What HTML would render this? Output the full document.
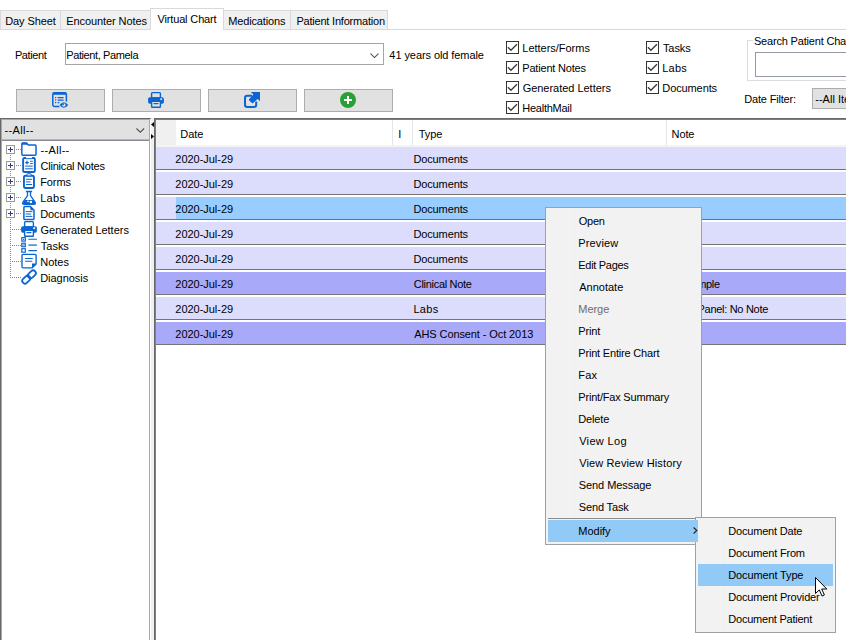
<!DOCTYPE html>
<html><head><meta charset="utf-8"><title>Virtual Chart</title>
<style>
*{box-sizing:border-box;margin:0;padding:0}
html,body{width:846px;height:640px;overflow:hidden;background:#fff}
body{font-family:"Liberation Sans",sans-serif;font-size:11px;color:#000;position:relative}
.a{position:absolute;white-space:nowrap}
.t{position:absolute;white-space:nowrap;line-height:14px;height:14px}
.tab{position:absolute;top:10px;height:19px;background:#f0f0f0;border:1px solid #d9d9d9;border-bottom:none}
.btn{position:absolute;top:89px;height:23px;width:89px;background:#e1e1e1;border:1px solid #adadad}
.btn svg{position:absolute;left:35px;top:2px;overflow:visible}
.cb{position:absolute;width:13px;height:13px;border:1px solid #333;background:#fff}
.cb svg{position:absolute;left:0;top:0}
.row{position:absolute;left:156px;width:690px;height:22px;background:#dcdcfc}
.row.d{background:#a9a9f9}
.ln{position:absolute;left:156px;width:690px;height:1px;background:#747474}
.menu{position:absolute;background:#f2f2f2;border:1px solid #a0a0a0}
.ex{position:absolute;left:6px;width:9px;height:9px;border:1px solid #989898;background:#fff}
.ex:before{content:"";position:absolute;left:1px;top:3px;width:5px;height:1px;background:#2b3f8f}
.ex:after{content:"";position:absolute;left:3px;top:1px;width:1px;height:5px;background:#2b3f8f}
.hd{position:absolute;left:16px;width:5px;height:1px;background:repeating-linear-gradient(to right,#868686 0 1px,transparent 1px 2px)}
.ic{position:absolute;left:21px;overflow:visible}
</style></head><body>
<div class="a" style="left:0;top:29px;width:846px;height:1px;background:#d9d9d9"></div>
<div class="tab" style="left:0;width:61px"></div><div class="tab" style="left:60px;width:92px"></div><div class="tab" style="left:223px;width:68px"></div><div class="tab" style="left:290px;width:98px"></div>
<div class="tab" style="left:150px;top:8px;width:74px;height:22px;background:#fff"></div>
<div id="tb1" class="t" style="left:5.20px;top:14px;letter-spacing:-0.085px">Day Sheet</div><div id="tb2" class="t" style="left:66.20px;top:14px;letter-spacing:-0.081px">Encounter Notes</div><div id="tb3" class="t" style="left:157.45px;top:12px;letter-spacing:-0.142px">Virtual Chart</div><div id="tb4" class="t" style="left:228.20px;top:14px;letter-spacing:-0.140px">Medications</div><div id="tb5" class="t" style="left:296.40px;top:14px;letter-spacing:-0.206px">Patient Information</div>
<div id="pt1" class="t" style="left:14.90px;top:48px;letter-spacing:-0.377px">Patient</div><div class="a" style="left:65px;top:43px;width:319px;height:22px;border:1px solid #a6a6a6;background:#fff"></div><div id="pt2" class="t" style="left:66.20px;top:48px;letter-spacing:-0.382px">Patient, Pamela</div><svg class="a" style="left:370px;top:53px" width="9" height="6" viewBox="0 0 9 6"><path d="M0.5 0.6L4.5 4.6L8.5 0.6" fill="none" stroke="#505050" stroke-width="1.05"/></svg><div id="pt3" class="t" style="left:389.35px;top:48px;letter-spacing:-0.075px">41 years old female</div>
<div class="cb" style="left:506px;top:41px"><svg width="11" height="11" viewBox="0 0 11 11"><path d="M0.9 5.3L3.9 8.3L10 2.2" fill="none" stroke="#3a3a3a" stroke-width="1.3"/></svg></div><div id="ca0" class="t" style="left:522.30px;top:41px;letter-spacing:-0.021px">Letters/Forms</div>
<div class="cb" style="left:506px;top:61px"><svg width="11" height="11" viewBox="0 0 11 11"><path d="M0.9 5.3L3.9 8.3L10 2.2" fill="none" stroke="#3a3a3a" stroke-width="1.3"/></svg></div><div id="ca1" class="t" style="left:522.30px;top:61px;letter-spacing:-0.195px">Patient Notes</div>
<div class="cb" style="left:506px;top:81px"><svg width="11" height="11" viewBox="0 0 11 11"><path d="M0.9 5.3L3.9 8.3L10 2.2" fill="none" stroke="#3a3a3a" stroke-width="1.3"/></svg></div><div id="ca2" class="t" style="left:522.65px;top:81px;letter-spacing:-0.026px">Generated Letters</div>
<div class="cb" style="left:506px;top:101px"><svg width="11" height="11" viewBox="0 0 11 11"><path d="M0.9 5.3L3.9 8.3L10 2.2" fill="none" stroke="#3a3a3a" stroke-width="1.3"/></svg></div><div id="ca3" class="t" style="left:522.30px;top:101px;letter-spacing:-0.259px">HealthMail</div>
<div class="cb" style="left:646px;top:41px"><svg width="11" height="11" viewBox="0 0 11 11"><path d="M0.9 5.3L3.9 8.3L10 2.2" fill="none" stroke="#3a3a3a" stroke-width="1.3"/></svg></div><div id="cb0" class="t" style="left:662.95px;top:41px;letter-spacing:-0.073px">Tasks</div>
<div class="cb" style="left:646px;top:61px"><svg width="11" height="11" viewBox="0 0 11 11"><path d="M0.9 5.3L3.9 8.3L10 2.2" fill="none" stroke="#3a3a3a" stroke-width="1.3"/></svg></div><div id="cb1" class="t" style="left:662.30px;top:61px;letter-spacing:0.182px">Labs</div>
<div class="cb" style="left:646px;top:81px"><svg width="11" height="11" viewBox="0 0 11 11"><path d="M0.9 5.3L3.9 8.3L10 2.2" fill="none" stroke="#3a3a3a" stroke-width="1.3"/></svg></div><div id="cb2" class="t" style="left:662.30px;top:81px;letter-spacing:-0.104px">Documents</div>
<div class="a" style="left:747px;top:40px;width:120px;height:41px;border:1px solid #dcdcdc"></div><div class="a" style="left:753px;top:36px;width:93px;height:10px;background:#fff"></div><div id="sp" class="t" style="left:753.90px;top:34px;letter-spacing:-0.180px">Search Patient Chart</div><div class="a" style="left:755px;top:52px;width:110px;height:25px;border:1px solid #949aa3;background:#fff"></div><div id="df" class="t" style="left:744.30px;top:92px;letter-spacing:-0.190px">Date Filter:</div><div class="a" style="left:812px;top:88px;width:60px;height:21px;border:1px solid #adadad;background:#e1e1e1"></div><div id="ai" class="t" style="left:815.31px;top:92px;letter-spacing:0.000px">--All Items--</div>
<div class="btn" style="left:16px"><svg width="16" height="16" viewBox="0 0 16 16"><rect x="0.8" y="0.8" width="13.6" height="13.6" rx="1.6" fill="#e1e1e1" stroke="#0a64d2" stroke-width="1.5"/><rect x="0.8" y="0.6" width="13.6" height="2.2" rx="1" fill="#0a64d2"/><path d="M5.6 5.6H11.6M5.6 8.1H11.6M5.6 10.6H8.6" stroke="#0a64d2" stroke-width="1.1"/><rect x="3" y="5" width="1.2" height="1.2" fill="#0a64d2"/><rect x="3" y="7.5" width="1.2" height="1.2" fill="#0a64d2"/><rect x="3" y="10" width="1.2" height="1.2" fill="#0a64d2"/><rect x="7.4" y="9.6" width="9" height="6.6" fill="#e1e1e1"/><path d="M7.6 13Q11.8 7.4 16.2 13Q11.8 18.6 7.6 13Z" fill="#0a64d2"/><circle cx="11.9" cy="13" r="1.75" fill="#e1e1e1"/><path d="M11.9 13V11.25A1.75 1.75 0 0 0 10.15 13Z" fill="#0a64d2"/></svg></div>
<div class="btn" style="left:112px"><svg width="16" height="16" viewBox="0 0 16 16"><rect x="3.6" y="0.6" width="8.8" height="5.4" rx="0.8" fill="#e1e1e1" stroke="#0a64d2" stroke-width="1.4"/><rect x="0.1" y="5.3" width="15.8" height="6.5" rx="1.7" fill="#0a64d2"/><rect x="12.3" y="6.3" width="1.8" height="1.8" fill="#e1e1e1"/><rect x="3.6" y="9.3" width="8.8" height="5.9" rx="0.8" fill="#e1e1e1" stroke="#0a64d2" stroke-width="1.4"/><path d="M5.3 11H11L9.6 12.3H5.7Z" fill="#0a64d2"/></svg></div>
<div class="btn" style="left:208px"><svg width="16" height="16" viewBox="0 0 16 16"><path d="M8 3.8H3.2Q1 3.8 1 6V12.8Q1 15 3.2 15H10Q12.2 15 12.2 12.8V9.4" fill="none" stroke="#0a64d2" stroke-width="2"/><path d="M6.9 0H16V9.2L13.7 6.9L9.1 10.9Q8.3 11.4 7.6 10.8L5.3 8.5Q4.7 7.7 5.3 7L9.4 2.6Z" fill="#0a64d2"/></svg></div>
<div class="btn" style="left:304px"><svg width="16" height="16" viewBox="0 0 16 16"><circle cx="8" cy="8" r="8" fill="#27a134"/><path d="M4 8H12M8 4V12" stroke="#fff" stroke-width="2"/></svg></div>
<div class="a" style="left:0;top:118px;width:150px;height:530px;background:#fff;border-left:1px solid #696969;border-top:1px solid #696969"></div>
<div class="a" style="left:150px;top:118px;width:1px;height:1px;background:#8a8a8a"></div>
<div class="a" style="left:1px;top:119px;width:149px;height:530px;border:1px solid #a4a8b0;border-bottom:none"></div>
<div class="a" style="left:151px;top:118px;width:3px;height:530px;background:#f0f0f0"></div>
<div class="a" style="left:2px;top:120px;width:147px;height:19px;background:#e1e1e1"></div>
<div class="a" style="left:2px;top:139px;width:147px;height:1px;background:#b5b8bd"></div>
<div class="a" style="left:2px;top:140px;width:147px;height:1px;background:#858a92"></div>
<div id="cm" class="t" style="left:4.51px;top:123px;letter-spacing:0.350px">--All--</div><svg class="a" style="left:135.8px;top:128.1px" width="9" height="6" viewBox="0 0 9 6"><path d="M0.5 0.5L4.3 4.2L8.1 0.5" fill="none" stroke="#505050" stroke-width="1.05"/></svg>
<div class="a" style="left:10px;top:155px;width:1px;height:123px;background:repeating-linear-gradient(to bottom,#868686 0 1px,transparent 1px 2px)"></div>
<div class="ex" style="top:145px"></div><div class="hd" style="top:149px"></div><svg class="ic" style="top:141px" width="16" height="16" viewBox="0 0 16 16"><path d="M0.85 2.8Q0.85 1.85 1.8 1.85H5.5L7.3 3.95H14.1Q15.05 3.95 15.05 4.9V13.2Q15.05 14.15 14.1 14.15H1.8Q0.85 14.15 0.85 13.2Z" fill="#fff" stroke="#0a64d2" stroke-width="1.45" stroke-linejoin="round"/><path d="M0.85 1.7H5.6L7.3 3.8H0.85Z" fill="#0a64d2"/></svg><div id="tr0" class="t" style="left:40.61px;top:143px;letter-spacing:0.300px">--All--</div>
<div class="ex" style="top:161px"></div><div class="hd" style="top:165px"></div><svg class="ic" style="top:157px" width="16" height="16" viewBox="0 0 16 16"><rect x="2.15" y="0.95" width="11.7" height="14.1" rx="1.3" fill="#fff" stroke="#0a64d2" stroke-width="1.9"/><rect x="5" y="-0.1" width="6" height="1.5" fill="#fff"/><path d="M4.8 1.75H11.2" stroke="#0a64d2" stroke-width="0.7"/><path d="M4.2 5.5H7.8M6 3.7V7.3" stroke="#0a64d2" stroke-width="1.25"/><path d="M9.1 4.3H11.8M9.1 6.6H11.8M4.2 9.1H11.8M4.2 11.8H11.8" stroke="#0a64d2" stroke-width="1"/></svg><div id="tr1" class="t" style="left:40.54px;top:159px;letter-spacing:-0.215px">Clinical Notes</div>
<div class="ex" style="top:177px"></div><div class="hd" style="top:181px"></div><svg class="ic" style="top:173px" width="16" height="16" viewBox="0 0 16 16"><rect x="2.95" y="2.75" width="10" height="12.2" rx="1.6" fill="#fff" stroke="#0a64d2" stroke-width="1.9"/><rect x="6" y="0.7" width="4" height="2.2" rx="0.7" fill="#fff" stroke="#0a64d2" stroke-width="1"/><path d="M5 6.3H11.1M5 8.9H9.6M5 11.5H11.1" stroke="#0a64d2" stroke-width="1"/></svg><div id="tr2" class="t" style="left:40.20px;top:175px;letter-spacing:-0.091px">Forms</div>
<div class="ex" style="top:193px"></div><div class="hd" style="top:197px"></div><svg class="ic" style="top:189px" width="16" height="16" viewBox="0 0 16 16"><path d="M6.5 2.4V6.6L1.8 13.4Q1 15.3 3.1 15.4H12.9Q15 15.3 14.2 13.4L9.5 6.6V2.4" fill="#fff" stroke="#0a64d2" stroke-width="1.3" stroke-linejoin="round"/><path d="M4.9 2.5H11.1" stroke="#0a64d2" stroke-width="1.5"/><path d="M3.7 10.9H12.3L14 13.4Q14.4 15 12.9 15.1H3.1Q1.6 15 2 13.4Z" fill="#0a64d2"/><circle cx="7" cy="12.3" r="0.85" fill="#fff"/><circle cx="9.9" cy="13" r="1.3" fill="#fff"/></svg><div id="tr3" class="t" style="left:40.20px;top:191px;letter-spacing:0.282px">Labs</div>
<div class="ex" style="top:209px"></div><div class="hd" style="top:213px"></div><svg class="ic" style="top:205px" width="16" height="16" viewBox="0 0 16 16"><path d="M2.9 2.6Q2.9 1.5 4 1.5H9.3L13 5.2V13.4Q13 14.5 11.9 14.5H4Q2.9 14.5 2.9 13.4Z" fill="#fff" stroke="#0a64d2" stroke-width="1.5" stroke-linejoin="round"/><path d="M9.4 0.9L13.7 5.2H9.4Z" fill="#0a64d2"/><path d="M4.6 6.6H11.4M4.6 9H10.2M4.6 11.4H11.4" stroke="#0a64d2" stroke-width="1"/></svg><div id="tr4" class="t" style="left:40.20px;top:207px;letter-spacing:-0.117px">Documents</div>
<div class="hd" style="left:12px;width:9px;top:229px"></div><svg class="ic" style="top:221px" width="16" height="16" viewBox="0 0 16 16"><rect x="3.6" y="0.6" width="8.8" height="5.4" rx="0.8" fill="#fff" stroke="#0a64d2" stroke-width="1.4"/><rect x="0.1" y="5.3" width="15.8" height="6.5" rx="1.7" fill="#0a64d2"/><rect x="12.3" y="6.3" width="1.8" height="1.8" fill="#fff"/><rect x="3.6" y="9.3" width="8.8" height="5.9" rx="0.8" fill="#fff" stroke="#0a64d2" stroke-width="1.4"/><path d="M5.3 11H11L9.6 12.3H5.7Z" fill="#0a64d2"/></svg><div id="tr5" class="t" style="left:40.55px;top:223px;letter-spacing:-0.020px">Generated Letters</div>
<div class="hd" style="left:12px;width:9px;top:245px"></div><svg class="ic" style="top:237px" width="16" height="16" viewBox="0 0 16 16"><rect x="0.8" y="0.6" width="3.5" height="3.5" fill="#fff" stroke="#0a64d2" stroke-width="1.15"/><rect x="0.8" y="6.2" width="3.5" height="3.5" fill="#fff" stroke="#0a64d2" stroke-width="1.15"/><rect x="0.8" y="11.7" width="3.5" height="3.5" fill="#fff" stroke="#0a64d2" stroke-width="1.15"/><rect x="2" y="1.8" width="1.1" height="1.1" fill="#0a64d2"/><path d="M2 7V8.9M3.1 7V8.9" stroke="#0a64d2" stroke-width="0.55"/><path d="M7.4 2.3H15.9M7.4 13.6H15.9" stroke="#0a64d2" stroke-width="1.1"/><path d="M7.4 8.1H15.9" stroke="#0a64d2" stroke-width="1.7" opacity="0.72"/></svg><div id="tr6" class="t" style="left:40.85px;top:239px;letter-spacing:-0.023px">Tasks</div>
<div class="hd" style="left:12px;width:9px;top:261px"></div><svg class="ic" style="top:253px" width="16" height="16" viewBox="0 0 16 16"><path d="M1 2.5Q1 1.4 2.1 1.4H14Q15.1 1.4 15.1 2.5V10.9L11.2 14.8H2.1Q1 14.8 1 13.7Z" fill="#fff" stroke="#0a64d2" stroke-width="1.35" stroke-linejoin="round"/><path d="M15.3 10.6H11V14.9Z" fill="#0a64d2"/><path d="M4.1 5.5H11.8M4.1 8.2H11.2" stroke="#0a64d2" stroke-width="1.1"/></svg><div id="tr7" class="t" style="left:40.20px;top:255px;letter-spacing:0.016px">Notes</div>
<div class="hd" style="left:12px;width:9px;top:277px"></div><svg class="ic" style="top:269px" width="16" height="16" viewBox="0 0 16 16"><g transform="translate(8.05 8) rotate(-43)" fill="none" stroke="#0a64d2" stroke-width="1.8"><rect x="-8.3" y="-2.7" width="9" height="5.4" rx="2.7"/><path d="M2 -2.7H5.6A2.7 2.7 0 0 1 5.6 2.7H2" stroke="#fff" stroke-width="3.2"/><rect x="-0.7" y="-2.7" width="9" height="5.4" rx="2.7"/></g></svg><div id="tr8" class="t" style="left:40.20px;top:271px;letter-spacing:-0.038px">Diagnosis</div>
<svg class="a" style="left:150px;top:120px" width="5" height="21" viewBox="0 0 5 21"><path d="M4 2V7L1 4.5Z" fill="#000"/><path d="M1 14V19L4 16.5Z" fill="#000"/></svg>
<div class="a" style="left:154px;top:118px;width:700px;height:530px;border:1px solid #696969;background:#fff"></div>
<div class="a" style="left:155px;top:119px;width:700px;height:530px;border:1px solid #7a7e85"></div>
<div class="a" style="left:156px;top:120px;width:20px;height:25px;background:#f0f0f0"></div>
<div class="a" style="left:156px;top:145px;width:690px;height:2px;background:#f4f4f4"></div>
<div class="a" style="left:392px;top:120px;width:1px;height:25px;background:#e5e5e5"></div>
<div class="a" style="left:412px;top:120px;width:1px;height:25px;background:#e5e5e5"></div>
<div class="a" style="left:666px;top:120px;width:1px;height:25px;background:#e5e5e5"></div>
<div id="h1" class="t" style="left:180.30px;top:127px;letter-spacing:-0.048px">Date</div><div id="h2" class="t" style="left:398.18px;top:127px;letter-spacing:-0.300px">I</div><div id="h3" class="t" style="left:418.75px;top:127px;letter-spacing:-0.040px">Type</div><div id="h4" class="t" style="left:671.60px;top:127px;letter-spacing:-0.115px">Note</div>
<div class="row" style="top:147px"></div><div class="ln" style="top:169px"></div><div id="rd0" class="t" style="left:175.35px;top:152px;letter-spacing:-0.032px">2020-Jul-29</div><div id="rt0" class="t" style="left:413.40px;top:152px;letter-spacing:-0.117px">Documents</div>
<div class="row" style="top:172px"></div><div class="ln" style="top:194px"></div><div id="rd1" class="t" style="left:175.35px;top:177px;letter-spacing:-0.032px">2020-Jul-29</div><div id="rt1" class="t" style="left:413.40px;top:177px;letter-spacing:-0.117px">Documents</div>
<div class="row" style="top:197px"><div class="a" style="left:20px;top:0;width:670px;height:22px;background:#99ccff"></div></div><div class="ln" style="top:219px"></div><div id="rd2" class="t" style="left:175.35px;top:202px;letter-spacing:-0.032px">2020-Jul-29</div><div id="rt2" class="t" style="left:413.40px;top:202px;letter-spacing:-0.117px">Documents</div>
<div class="row" style="top:222px"></div><div class="ln" style="top:244px"></div><div id="rd3" class="t" style="left:175.35px;top:227px;letter-spacing:-0.032px">2020-Jul-29</div><div id="rt3" class="t" style="left:413.40px;top:227px;letter-spacing:-0.117px">Documents</div>
<div class="row" style="top:247px"></div><div class="ln" style="top:269px"></div><div id="rd4" class="t" style="left:175.35px;top:252px;letter-spacing:-0.032px">2020-Jul-29</div><div id="rt4" class="t" style="left:413.40px;top:252px;letter-spacing:-0.117px">Documents</div>
<div class="row d" style="top:272px"></div><div class="ln" style="top:294px"></div><div id="rd5" class="t" style="left:175.35px;top:277px;letter-spacing:-0.032px">2020-Jul-29</div><div id="rt5" class="t" style="left:413.74px;top:277px;letter-spacing:-0.292px">Clinical Note</div><div id="n1" class="t" style="left:663.48px;top:277px;letter-spacing:-0.300px">An Example</div>
<div class="row" style="top:297px"></div><div class="ln" style="top:319px"></div><div id="rd6" class="t" style="left:175.35px;top:302px;letter-spacing:-0.032px">2020-Jul-29</div><div id="rt6" class="t" style="left:413.40px;top:302px;letter-spacing:0.316px">Labs</div><div id="n2" class="t" style="left:673.09px;top:302px;letter-spacing:-0.300px">Lipid Panel: No Note</div>
<div class="row d" style="top:322px"></div><div class="ln" style="top:344px"></div><div id="rd7" class="t" style="left:175.35px;top:327px;letter-spacing:-0.032px">2020-Jul-29</div><div id="rt7" class="t" style="left:414.28px;top:327px;letter-spacing:-0.098px">AHS Consent - Oct 2013</div>
<div class="menu" style="left:545px;top:207px;width:157px;height:338px"><div class="a" style="left:28px;top:2px;width:1px;height:332px;background:#eeeeee"></div><div class="a" style="left:2px;top:310px;width:152px;height:1px;background:#8c8c8c"></div></div>
<div id="m0" class="t" style="left:578.68px;top:214px;letter-spacing:-0.225px">Open</div><div id="m1" class="t" style="left:578.30px;top:236px;letter-spacing:0.142px">Preview</div><div id="m2" class="t" style="left:578.30px;top:258px;letter-spacing:-0.300px">Edit Pages</div><div id="m3" class="t" style="left:579.18px;top:280px;letter-spacing:0.010px">Annotate</div><div id="m4" class="t" style="left:578.30px;top:302px;letter-spacing:-0.047px;color:#6d6d6d">Merge</div><div id="m5" class="t" style="left:578.30px;top:324px;letter-spacing:-0.159px">Print</div><div id="m6" class="t" style="left:578.30px;top:346px;letter-spacing:-0.187px">Print Entire Chart</div><div id="m7" class="t" style="left:578.30px;top:368px;letter-spacing:0.242px">Fax</div><div id="m8" class="t" style="left:578.30px;top:390px;letter-spacing:-0.200px">Print/Fax Summary</div><div id="m9" class="t" style="left:578.30px;top:412px;letter-spacing:-0.161px">Delete</div><div id="m10" class="t" style="left:579.15px;top:434px;letter-spacing:0.344px">View Log</div><div id="m11" class="t" style="left:579.15px;top:456px;letter-spacing:0.140px">View Review History</div><div id="m12" class="t" style="left:578.70px;top:478px;letter-spacing:-0.054px">Send Message</div><div id="m13" class="t" style="left:578.70px;top:500px;letter-spacing:-0.125px">Send Task</div><div class="menu" style="left:695px;top:517px;width:141px;height:116px"><div class="a" style="left:28px;top:2px;width:1px;height:110px;background:#eeeeee"></div><div class="a" style="left:2px;top:46px;width:135px;height:22px;background:#91c9f7"></div></div>
<div class="a" style="left:548px;top:520px;width:150px;height:22px;background:#91c9f7"></div><svg class="a" style="left:692.5px;top:527px" width="5" height="7" viewBox="0 0 5 7"><path d="M0.6 0.5L3.8 3.5L0.6 6.5" fill="none" stroke="#222" stroke-width="1.1"/></svg><div id="m14" class="t" style="left:578.30px;top:524px;letter-spacing:-0.015px">Modify</div>
<div id="s0" class="t" style="left:728.30px;top:524px;letter-spacing:-0.195px">Document Date</div><div id="s1" class="t" style="left:728.30px;top:546px;letter-spacing:-0.177px">Document From</div><div id="s2" class="t" style="left:728.30px;top:568px;letter-spacing:-0.138px">Document Type</div><div id="s3" class="t" style="left:728.30px;top:590px;letter-spacing:-0.173px">Document Provider</div><div id="s4" class="t" style="left:728.30px;top:612px;letter-spacing:-0.230px">Document Patient</div>
<svg class="a" style="left:815px;top:577px" width="13" height="20" viewBox="0 0 13 20"><path d="M0.5 0.5V16.5L4.3 12.9L7 19L9.4 18L6.7 12H11.8Z" fill="#fff" stroke="#000" stroke-width="1"/></svg>
</body></html>
